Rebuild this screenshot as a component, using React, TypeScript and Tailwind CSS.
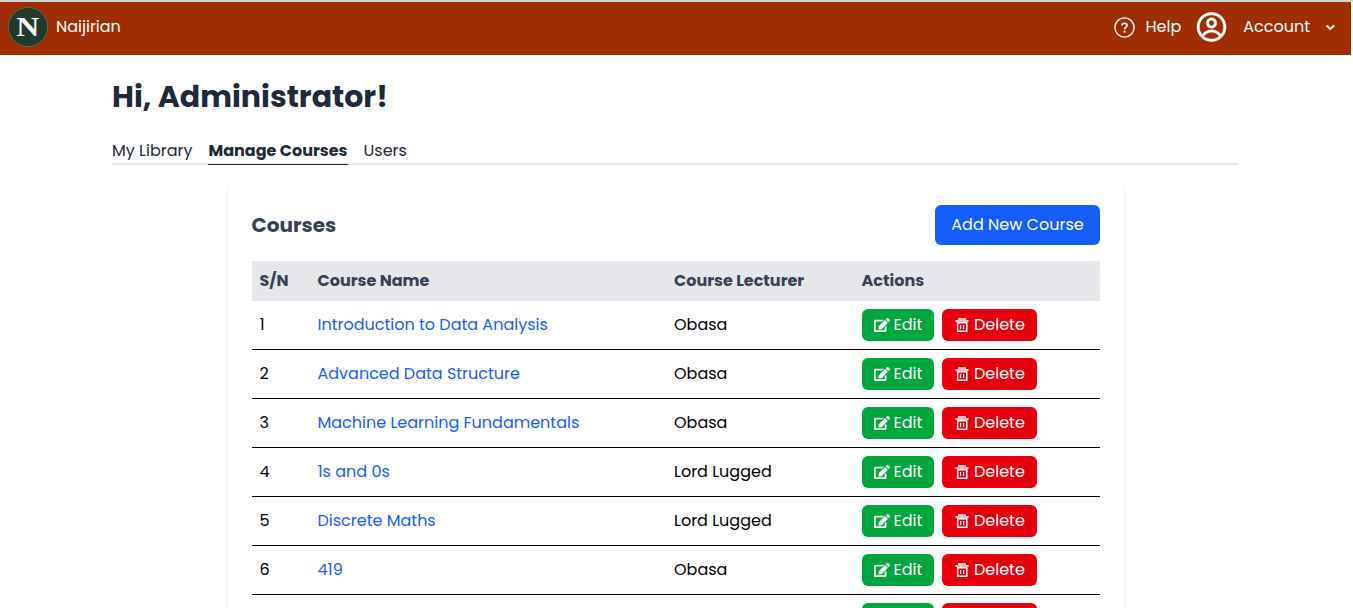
import { CgProfile } from "react-icons/cg";
import { FaEdit } from "react-icons/fa";

const courses = [
  { name: "Introduction to Data Analysis", lecturer: "Obasa" },
  { name: "Advanced Data Structure", lecturer: "Obasa" },
  { name: "Machine Learning Fundamentals", lecturer: "Obasa" },
  { name: "1s and 0s", lecturer: "Lord Lugged" },
  { name: "Discrete Maths", lecturer: "Lord Lugged" },
  { name: "419", lecturer: "Obasa" },
];

function Logo() {
  return (
    <svg viewBox="0 0 40 40" className="h-10 w-10 shrink-0">
      <circle cx="20" cy="20" r="19.6" fill="#203a2c" stroke="#66756a" strokeWidth="0.8" />
      <text transform="translate(19.8 29.2) scale(1.14 1)" textAnchor="middle" fontFamily="Liberation Serif, serif" fontWeight="700" fontSize="28" fill="#f5f5f5">N</text>
    </svg>
  );
}

function HelpIcon({ className }: { className: string }) {
  return (
    <svg viewBox="0 0 21 21" fill="none" stroke="currentColor" className={className}>
      <circle cx="10.5" cy="10.5" r="9.6" strokeWidth="1.4" />
      <path d="M8 8.5C8 7 9.1 6.3 10.5 6.3S13 7.1 13 8.4c0 1.7-2.4 1.8-2.4 3.8" strokeWidth="1.7" />
      <circle cx="10.6" cy="14.6" r="1.1" fill="currentColor" stroke="none" />
    </svg>
  );
}

function ChevronIcon({ className }: { className: string }) {
  return (
    <svg viewBox="0 0 16 16" fill="none" stroke="currentColor" strokeWidth="2" className={className}>
      <path d="M4.4 6.4 8.3 10l3.9-3.6" />
    </svg>
  );
}

function TrashIcon({ className }: { className: string }) {
  return (
    <svg viewBox="0 0 16 16" fill="currentColor" className={className}>
      <path d="M4 1h8v2h2.6v2H1.4V3H4z" opacity="0.75" />
      <path fillRule="evenodd" d="M2.9 5h10.6v10H2.9zM4.4 6.5v7H12v-7z" />
      <path d="M6 8h1.2v4H6zM9 8h1.2v4H9z" />
    </svg>
  );
}

function Actions() {
  return (
    <div className="flex gap-2 text-white">
      <button className="flex h-8 w-[72px] items-center rounded-md bg-[#00a63e] pl-3">
        <FaEdit className="mr-1 h-4 w-4" />Edit
      </button>
      <button className="flex h-8 w-[95px] items-center rounded-md bg-[#e7000b] pl-3">
        <TrashIcon className="mr-[4.5px] h-4 w-4" />Delete
      </button>
    </div>
  );
}

export default function App() {
  return (
    <div className="flex h-[608px] w-[1353px] flex-col overflow-hidden border-t-2 border-[#cfd4d6] bg-white font-[Poppins,Inter,sans-serif] text-base text-black">
      <header className="mr-[2px] flex h-[53px] shrink-0 items-center justify-between bg-[#9f2d00] pb-[3px] pl-2 pr-[13px] text-white">
        <div className="flex items-center gap-2">
          <Logo />
          <span>Naijirian</span>
        </div>
        <div className="flex items-center">
          <HelpIcon className="mt-px mr-[10.5px] h-[21px] w-[21px]" />
          <span className="mr-[14px]">Help</span>
          <CgProfile className="mr-[15px] h-8 w-[33px]" strokeWidth="0.2" />
          <span className="mr-[12px]">Account</span>
          <ChevronIcon className="h-4 w-4" />
        </div>
      </header>
      <main className="flex flex-col pl-28 pr-[114px]">
        <h1 className="mt-6 h-9 whitespace-nowrap text-[30px] leading-9 font-bold text-[#1e2939]">Hi, Administrator!</h1>
        <nav className="mt-[23px] flex h-[27px] gap-4 border-b-2 border-gray-200 leading-[26px] whitespace-nowrap text-[#1e2939]">
          <span className="w-20">My Library</span>
          <span className="h-[27px] w-[139.5px] border-b border-[#1e2939] pl-[0.5px] font-bold">Manage Courses</span>
          <span>Users</span>
        </nav>
        <section className="mx-auto mt-4 w-[896px] rounded-lg p-6 shadow-md">
          <div className="flex items-center justify-between">
            <h2 className="text-xl font-bold text-[#364153]">Courses</h2>
            <button className="h-10 w-[165px] rounded-md bg-[#155dfc] pl-px text-white">Add New Course</button>
          </div>
          <div className="mt-4">
            <div className="grid h-10 grid-cols-[58px_356.5px_187.5px_1fr] items-center bg-gray-200 pl-2 font-bold text-[#364153]">
              <span>S/N</span>
              <span>Course Name</span>
              <span>Course Lecturer</span>
              <span>Actions</span>
            </div>
            {courses.map((course, i) => (
              <div key={course.name} className="grid h-[49px] grid-cols-[58px_356.5px_187.5px_1fr] items-center border-b border-black pl-2">
                <span>{i + 1}</span>
                <span className="text-[#155dfc]">{course.name}</span>
                <span>{course.lecturer}</span>
                <Actions />
              </div>
            ))}
            <div className="grid h-[49px] grid-cols-[602px_1fr] items-center border-b border-black pl-2">
              <span />
              <Actions />
            </div>
          </div>
        </section>
      </main>
    </div>
  );
}
